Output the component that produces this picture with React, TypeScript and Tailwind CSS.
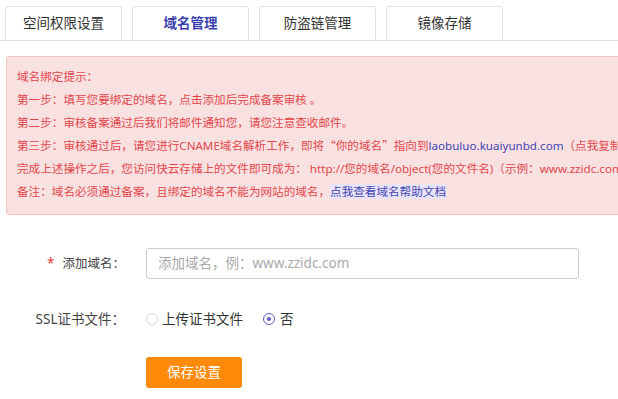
const TABS = ['空间权限设置', '域名管理', '防盗链管理', '镜像存储'];

const CJK = { fontFamily: "'Noto Sans CJK SC', sans-serif" };

function Radio({ checked }: { checked?: boolean }) {
  return checked ? (
    <span className="flex h-[12px] w-[12px] items-center justify-center rounded-full border border-[#5a5cc4] bg-white">
      <span className="h-[4px] w-[4px] rounded-full bg-[#5a5cc4]" />
    </span>
  ) : (
    <span className="h-[12px] w-[12px] rounded-full border border-[#d6d6d6] bg-white" />
  );
}

export default function App() {
  return (
    <div
      className="h-[399px] w-[618px] overflow-hidden bg-white text-[#333]"
      style={{ fontFamily: "'Noto Sans', 'Noto Sans CJK SC', sans-serif" }}
    >
      {/* tabs */}
      <div className="flex gap-[10px] border-b border-[#dedede] pl-[5px] pt-[6px]">
        {TABS.map((t, i) => (
          <div
            key={t}
            className={`flex h-[34px] w-[117px] items-center justify-center rounded-t-[3px] border border-b-0 border-[#e2e2e2] bg-white text-[13.5px] ${
              i === 1 ? 'font-semibold text-[#3b3fae]' : 'text-[#333]'
            }`}
          >
            {t}
          </div>
        ))}
      </div>

      {/* notice */}
      <div className="ml-[6px] mt-[15px] w-[640px] rounded-[3px] border border-[#f0c6c6] bg-[#f9e1e1] pb-[10px] pl-[10px] pt-[9px] text-[11.6px] leading-[22.8px] text-[#e2474b]">
        <p className="whitespace-nowrap">域名绑定提示：</p>
        <p className="whitespace-nowrap">第一步：填写您要绑定的域名，点击添加后完成备案审核 。</p>
        <p className="whitespace-nowrap">第二步：审核备案通过后我们将邮件通知您，请您注意查收邮件。</p>
        <p className="whitespace-nowrap">
          第三步：审核通过后，请您进行CNAME域名解析工作，即将<span style={CJK}>“你的域名”</span>指向到
          <span className="text-[#4446b3]">laobuluo.kuaiyunbd.com</span>（点我复制）
        </p>
        <p className="whitespace-nowrap">
          完成上述操作之后，您访问快云存储上的文件即可成为：&nbsp;http://您的域名/object(您的文件名)（示例：www.zzidc.com/object/a.jpg）
        </p>
        <p className="whitespace-nowrap">
          备注：域名必须通过备案，且绑定的域名不能为网站的域名，
          <span className="bg-[#e9e3f7] text-[#4446b3]">点我查看域名帮助文档</span>
        </p>
      </div>

      {/* form */}
      <div className="mt-[33px] flex flex-col gap-[30px] text-[13.5px]">
        <div className="flex items-center">
          <label className="w-[125px] text-right text-[12.5px] text-[#444]">
            <span className="mr-[8px] text-[13.5px] text-[#e4393c]">*</span>添加域名：
          </label>
          <input
            className="ml-[21px] h-[31px] w-[433px] rounded-[3px] border border-[#cccccc] px-[11px] text-[13.5px] outline-none placeholder:text-[#a9a9a9]"
            placeholder="添加域名，例：www.zzidc.com"
          />
        </div>

        <div className="flex h-[20px] items-center">
          <label className="w-[125px] text-right text-[#444]">SSL证书文件：</label>
          <div className="ml-[21px] flex items-center text-[#333]">
            <Radio />
            <span className="ml-[4px]">上传证书文件</span>
            <span className="ml-[20px]">
              <Radio checked />
            </span>
            <span className="ml-[5px]">否</span>
          </div>
        </div>

        <div className="-mt-[2px] pl-[146px]">
          <button className="h-[31px] w-[96px] rounded-[3px] bg-[#ff8a0a] text-[13.5px] text-white">
            保存设置
          </button>
        </div>
      </div>
    </div>
  );
}
